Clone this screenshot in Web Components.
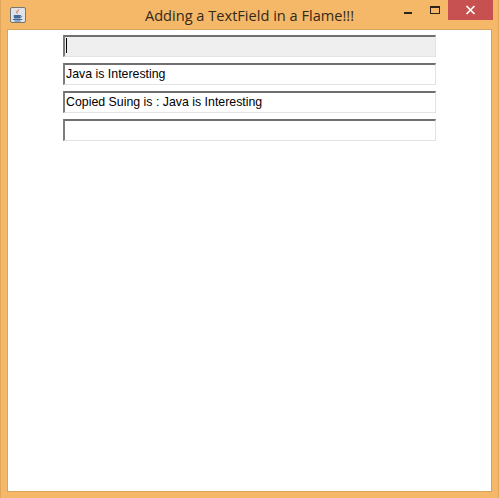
<!DOCTYPE html>
<html>
<head>
<meta charset="utf-8">
<title>Adding a TextField in a Flame!!!</title>
<style>
  html, body { margin: 0; padding: 0; width: 499px; height: 498px; overflow: hidden; }
</style>
</head>
<body>
<win-frame caption="Adding a TextField in a Flame!!!">
  <text-box disabled caret></text-box>
  <text-box value="Java is Interesting"></text-box>
  <text-box value="Copied Suing is : Java is Interesting"></text-box>
  <text-box></text-box>
</win-frame>
<script>
class TitleBar extends HTMLElement {
  constructor() {
    super();
    const shadow = this.attachShadow({ mode: 'open' });
    shadow.innerHTML = `
      <style>
        :host {
          display: grid;
          grid-template-columns: 1fr auto 1fr;
          height: 29px;
          flex: none;
          font-family: "Open Sans", "Noto Sans", sans-serif;
          color: #35291a;
        }
        .left { display: flex; align-items: flex-start; padding: 7px 0 0 9px; }
        .icon { width: 16px; height: 16px; display: block; }
        .title { font-size: 14.6px; line-height: 30px; white-space: nowrap; }
        .controls { display: flex; justify-content: flex-end; align-items: flex-start; padding-right: 5px; }
        .btn { height: 20px; display: flex; justify-content: center; }
        .min { width: 26px; }
        .max { width: 26px; }
        .close { width: 45px; background: #c75050; align-items: center; }
        svg { display: block; }
      </style>
      <div class="left">
        <svg class="icon" viewBox="0 0 16 16">
          <rect x="0.5" y="0.5" width="15" height="15" rx="1.5" fill="#dfe3e8" stroke="#77766f"/>
          <path d="M9 2c.9 1.3-2.1 2.3-1.8 3.8.1.6.5 1 .9 1.5-1.1-.5-2-1.1-1.8-2.2C6.500 3.800 8.900 3.300 9 2z" fill="#c9541f"/>
          <path d="M3.800 8h6.600v2.400c0 .7-.6 1.200-1.200 1.200H5c-.6 0-1.200-.5-1.200-1.200z" fill="#3f6a9a"/>
          <path d="M10.200 8.700c1.800-.3 2 1.800-.4 2.100" fill="none" stroke="#3f6a9a" stroke-width=".9"/>
          <path d="M2.800 12.500h9.400M4.500 14h6" stroke="#3f6a9a" stroke-width="1"/>
        </svg>
      </div>
      <div class="title"></div>
      <div class="controls">
        <div class="btn min"><svg width="26" height="20"><rect x="8" y="12" width="8" height="2" fill="#2b2418"/></svg></div>
        <div class="btn max"><svg width="26" height="20"><rect x="8.500" y="7.500" width="9" height="6" fill="none" stroke="#2b2418"/><rect x="8" y="6" width="10" height="2" fill="#2b2418"/></svg></div>
        <div class="btn close"><svg width="11" height="10" viewBox="0 0 11 10"><path d="M1.500 1l8 8M9.500 1l-8 8" stroke="#fff" stroke-width="1.700"/></svg></div>
      </div>`;
  }

  static get observedAttributes() {
    return ['caption'];
  }

  attributeChangedCallback() {
    this.shadowRoot.querySelector('.title').textContent = this.getAttribute('caption') || '';
  }
}

class WinFrame extends HTMLElement {
  constructor() {
    super();
    const shadow = this.attachShadow({ mode: 'open' });
    shadow.innerHTML = `
      <style>
        :host {
          display: flex;
          flex-direction: column;
          width: 499px;
          height: 498px;
          box-sizing: border-box;
          background: #f4b868;
          border-left: 1px solid #e0a75c;
          border-right: 1px solid #e0a75c;
        }
        .client {
          flex: 1;
          margin: 0 6px 6px 6px;
          background: #fff;
          border: 1px solid #d8a35c;
          padding: 5px 0 0 55px;
          display: flex;
          flex-direction: column;
          gap: 6px;
        }
      </style>
      <title-bar></title-bar>
      <div class="client"><slot></slot></div>`;
  }

  connectedCallback() {
    this.shadowRoot.querySelector('title-bar').setAttribute('caption', this.getAttribute('caption') || '');
  }
}

class TextBox extends HTMLElement {
  constructor() {
    super();
    const shadow = this.attachShadow({ mode: 'open' });
    shadow.innerHTML = `
      <style>
        :host {
          display: flex;
          align-items: center;
          box-sizing: border-box;
          width: 373px;
          height: 22px;
          background: #fff;
          border-top: 2px solid #6f6f6f;
          border-left: 2px solid #7d7d7d;
          border-right: 1px solid #e3e3e3;
          border-bottom: 1px solid #e3e3e3;
          padding: 0 0 2px 1px;
          font: 12.35px "Liberation Sans", Arial, sans-serif;
          color: #000;
          white-space: nowrap;
        }
        :host([disabled]) { background: #efefef; }
        .caret { display: none; width: 1px; height: 15px; background: #000; }
        :host([caret]) .caret { display: block; }
      </style>
      <span class="caret"></span><span class="text"></span>`;
  }

  connectedCallback() {
    this.shadowRoot.querySelector('.text').textContent = this.getAttribute('value') || '';
  }
}

customElements.define('title-bar', TitleBar);
customElements.define('win-frame', WinFrame);
customElements.define('text-box', TextBox);
</script>
</body>
</html>
